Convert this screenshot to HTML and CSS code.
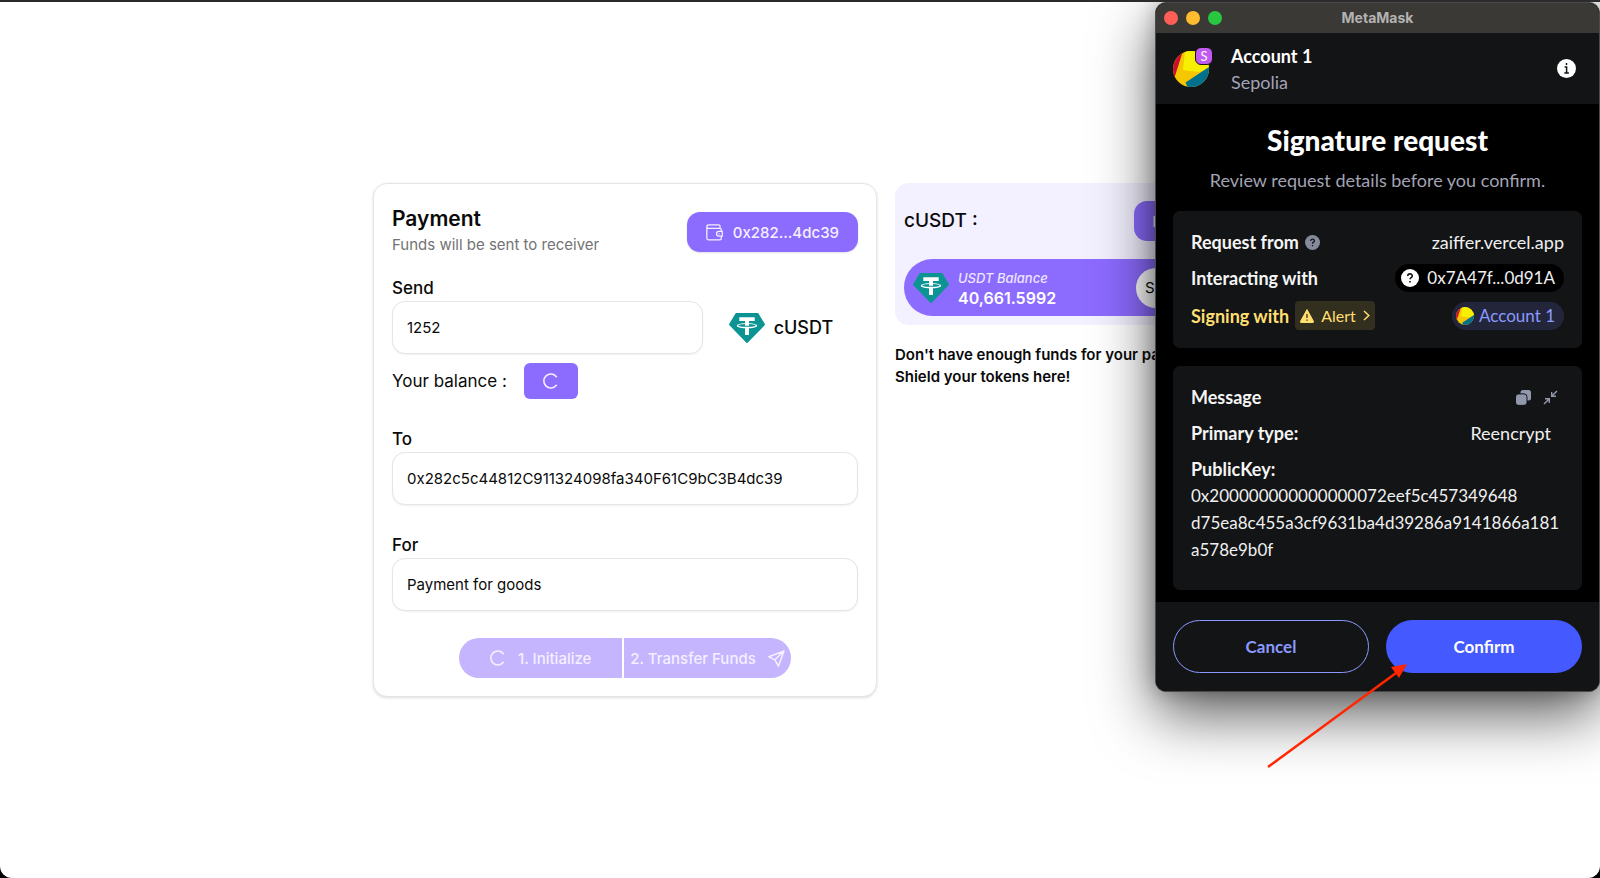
FILE: index.html
```html
<!DOCTYPE html>
<html lang="en">
<head>
<meta charset="utf-8">
<title>Payment</title>
<link rel="stylesheet" href="styles.css">
</head>
<body>
<svg class="defs" aria-hidden="true">
  <symbol id="tether" viewBox="0 0 36 30">
    <path fill="#0c9393" d="M7.400 0h21.200q.6 0 .9.500L35.800 11q.4.700-.2 1.300L18.600 29.700q-.6.500-1.200 0L.4 12.300q-.6-.6-.2-1.300L6.500.5q.3-.5.9-.5z"/>
    <path fill="#fff" d="M10.300 4.300h15.400v3.600h-5.700v2.300c4.700.2 8.200 1.200 8.200 2.500s-3.500 2.300-8.200 2.500v6.700h-4v-6.700c-4.700-.2-8.200-1.200-8.200-2.500s3.500-2.300 8.200-2.500V7.900h-5.700z"/>
    <path fill="#0c9393" d="M16 10.900c-3.900.2-6.700.8-6.700 1.500s3.700 1.400 8.700 1.400 8.700-.6 8.700-1.400-2.800-1.300-6.700-1.500v1.800h-4z"/>
  </symbol>
  <symbol id="loader" viewBox="0 0 24 24">
    <path d="M20 5.500A10.500 10.500 0 1 0 20 18.500" fill="none" stroke="currentColor" stroke-width="2.400" stroke-linecap="round"/>
  </symbol>
  <symbol id="jazz" viewBox="0 0 36 36">
    <clipPath id="disc"><circle cx="18" cy="18" r="18"/></clipPath>
    <g clip-path="url(#disc)">
      <path fill="#f6c700" d="M0 0h36v36H0z"/>
      <path fill="#c8102e" d="M0 0h10L1 28H0z"/>
      <path fill="#f6f000" d="M12 0h24v17l-10 4-16-2z"/>
      <path fill="#00708f" d="M36 16v20H14.500l-2-4.500z"/>
    </g>
  </symbol>
  <symbol id="question" viewBox="0 0 20 20">
    <circle cx="10" cy="10" r="10" fill="currentColor"/>
    <path d="M7.500 7.900C7.500 4.700 12.500 4.700 12.500 7.700 12.500 9.500 10 9.600 10 11.500M10 13.300v1.800" fill="none" stroke="#131416" stroke-width="1.800"/>
  </symbol>
</svg>

<main class="page">
  <section class="card">
    <header class="card-head">
      <div>
        <h1 class="card-title">Payment</h1>
        <p class="card-sub">Funds will be sent to receiver</p>
      </div>
      <button class="btn wallet" type="button">
        <svg class="icon-wallet" viewBox="0 0 16 16" fill="none" stroke="currentColor" stroke-width="1.200"><path d="M.8 2.500q0-1.700 1.700-1.700H12q1.200 0 1.200 1.200v1.700M.8 2.500q0 1.600 1.700 1.600h10.600q1.300 0 1.300 1.300v1.500M.8 2.500v10.800q0 1.700 1.700 1.700h10.600q1.300 0 1.300-1.300v-2.300M15.300 7h-3.200a2.200 2.200 0 0 0 0 4.400h3.200z"/><path d="M11.800 9.200h1"/></svg>
        0x282...4dc39
      </button>
    </header>

    <div class="field">
      <label class="label" for="send">Send</label>
      <div class="amount">
        <input class="input" id="send" type="text" value="1252">
        <div class="token"><svg class="tether"><use href="#tether"/></svg>cUSDT</div>
      </div>
      <div class="balance">
        <span>Your balance :</span>
        <button class="btn reveal" type="button" aria-label="Loading balance"><svg class="loader"><use href="#loader"/></svg></button>
      </div>
    </div>

    <div class="field">
      <label class="label" for="to">To</label>
      <input class="input" id="to" type="text" value="0x282c5c44812C911324098fa340F61C9bC3B4dc39">
    </div>

    <div class="field">
      <label class="label" for="for">For</label>
      <input class="input" id="for" type="text" value="Payment for goods">
    </div>

    <div class="steps">
      <button class="btn step first" type="button"><svg class="loader"><use href="#loader"/></svg>1. Initialize</button>
      <button class="btn step last" type="button">2. Transfer Funds
        <svg class="send" viewBox="0 0 17 17" fill="none" stroke="currentColor" stroke-width="1.500" stroke-linejoin="round"><path d="M16 1 .9 6.800l6 3 3.500 6.400zM16 1 6.900 9.800"/></svg>
      </button>
    </div>
  </section>

  <aside class="side">
    <div class="panel">
      <div class="panel-head">
        <h2 class="panel-title">cUSDT :</h2>
        <button class="btn decrypt" type="button">Reveal</button>
      </div>
      <div class="pill">
        <svg class="tether"><use href="#tether"/></svg>
        <div class="pill-text">
          <em class="pill-label">USDT Balance</em>
          <strong class="pill-value">40,661.5992</strong>
        </div>
        <button class="shield" type="button">Shield</button>
      </div>
    </div>
    <p class="hint">Don't have enough funds for your payment?<br>Shield your tokens here!</p>
  </aside>
</main>

<section class="window" aria-label="MetaMask">
  <header class="titlebar">
    <div class="lights"><i class="light red"></i><i class="light amber"></i><i class="light green"></i></div>
    <span class="window-title">MetaMask</span>
  </header>
  <div class="account">
    <div class="avatar">
      <svg class="avatar-pic"><use href="#jazz"/></svg>
      <span class="net">S</span>
    </div>
    <div class="account-text">
      <div class="account-name">Account 1</div>
      <div class="muted">Sepolia</div>
    </div>
    <button class="plain" type="button" aria-label="Account details">
      <svg class="info" viewBox="0 0 19 19"><circle cx="9.500" cy="9.500" r="9.500" fill="#fff"/><path d="M9.500 4v2M7.600 8h2v6M7.300 14h4.600" fill="none" stroke="#131416" stroke-width="1.500"/></svg>
    </button>
  </div>

  <div class="request">
    <div class="intro">
      <h2 class="request-title">Signature request</h2>
      <p class="muted">Review request details before you confirm.</p>
    </div>
    <div class="box">
      <div class="row">
        <span class="key">Request from <svg class="help"><use href="#question"/></svg></span>
        <span>zaiffer.vercel.app</span>
      </div>
      <div class="row">
        <span class="key">Interacting with</span>
        <span class="chip dark"><svg class="chip-icon"><use href="#question"/></svg>0x7A47f...0d91A</span>
      </div>
      <div class="row">
        <span class="key warn">Signing with
          <button class="alert" type="button">
            <svg class="alert-icon" viewBox="0 0 14 14"><path d="M7 .6 13.600 12.600q.2.900-.7.900H1.100q-.9 0-.7-.9z" fill="#ffdf70" stroke="#ffdf70" stroke-linejoin="round"/><path d="M7 5v4M7 10.400v1.400" stroke="#38331f" stroke-width="1.300"/></svg>
            Alert
            <svg class="chevron" viewBox="0 0 7 11"><path d="m1 1 4.800 4.500L1 10" fill="none" stroke="currentColor" stroke-width="1.500"/></svg>
          </button>
        </span>
        <span class="chip blue"><svg class="chip-icon"><use href="#jazz"/></svg>Account 1</span>
      </div>
    </div>
    <div class="box message">
      <div class="row">
        <span class="key">Message</span>
        <span class="tools">
          <button class="plain" type="button" aria-label="Copy"><svg class="tool" viewBox="0 0 15 15"><rect x="4.500" y="0" width="10.500" height="10.500" rx="2.500" fill="#9198ab"/><rect x="-.5" y="3.900" width="11.500" height="11.500" rx="3" fill="#9198ab" stroke="#131416"/></svg></button>
          <button class="plain" type="button" aria-label="Collapse"><svg class="tool" viewBox="0 0 15 15" fill="none" stroke="#9198ab" stroke-width="1.400"><path d="M14 1 8.700 6.300M8.700 2v4.300H13M1 14l5.300-5.300M2 8.700h4.300V13"/></svg></button>
        </span>
      </div>
      <div class="row">
        <span class="key">Primary type:</span>
        <span>Reencrypt</span>
      </div>
      <div>
        <div class="key">PublicKey:</div>
        <p class="hash">0x200000000000000072eef5c457349648<br>d75ea8c455a3cf9631ba4d39286a9141866a181<br>a578e9b0f</p>
      </div>
    </div>
  </div>

  <footer class="actions">
    <button class="action cancel" type="button">Cancel</button>
    <button class="action confirm" type="button">Confirm</button>
  </footer>
</section>

<svg class="arrow" viewBox="0 0 144 108" aria-hidden="true"><path d="M3 105 131 11" stroke="#ff2600" stroke-width="2.500"/><path d="M142 2 134 16 126 5z" fill="#ff2600"/></svg>
</body>
</html>
```
FILE: styles.css
```css
* { box-sizing: border-box; }

html { background: #000; }

body {
  margin: 0;
  position: relative;
  min-height: 100vh;
  overflow: hidden;
  background: #fff;
  border-top: 2px solid #2b2b2b;
  border-radius: 0 0 12px 12px;
  font-family: Inter, "Liberation Sans", sans-serif;
  font-size: 16px;
  color: #0a0a0a;
}

h1, h2, p { margin: 0; }
button { font-family: inherit; border: 0; cursor: pointer; }
svg { display: block; flex: none; }
.defs { position: absolute; width: 0; height: 0; }

/* Page */
.page {
  display: flex;
  justify-content: center;
  align-items: flex-start;
  gap: 18px;
  padding: 181px 24px 0;
}

.card {
  flex: 0 1 504px;
  padding: 22px 18px 18px;
  border: 1px solid #e5e5e5;
  border-radius: 14px;
  background: #fff;
  box-shadow: 0 1px 3px rgba(0, 0, 0, .14);
}

.card-head {
  display: flex;
  justify-content: space-between;
  align-items: center;
  margin-bottom: 17px;
}

.card-title { font-size: 21px; line-height: 26px; font-weight: 600; }
.card-sub { font-size: 15px; line-height: 26px; color: #737373; }

.btn {
  display: flex;
  align-items: center;
  justify-content: center;
  height: 40px;
  background: #8c6bff;
  color: #f4f0ff;
  font-size: 15px;
  font-weight: 500;
}

.wallet { gap: 10px; padding: 0 19px; border-radius: 13px; box-shadow: 0 1px 2px rgba(0, 0, 0, .12); }
.icon-wallet { width: 17px; height: 17px; }

.field { margin-bottom: 27px; }
.label { display: block; font-size: 17px; line-height: 26px; font-weight: 500; }

.input {
  display: block;
  width: 100%;
  height: 53px;
  padding: 0 14px;
  border: 1px solid #e5e5e5;
  border-radius: 13px;
  background: #fff;
  box-shadow: 0 1px 2px rgba(0, 0, 0, .06);
  font-family: inherit;
  font-size: 15px;
  color: #0a0a0a;
}

.amount { display: grid; grid-template-columns: 2fr 1fr; }
.token { display: flex; align-items: center; gap: 9px; padding-left: 26px; font-size: 18px; font-weight: 500; }
.tether { width: 36px; height: 30px; }

.balance { display: flex; align-items: center; gap: 17px; margin-top: 9px; font-size: 17px; }
.reveal { width: 54px; height: 36px; padding: 0; border-radius: 6px; }
.loader { width: 16px; height: 16px; }

.steps { display: flex; justify-content: center; gap: 2px; }
.step { background: #c5b5ff; }
.first { width: 163px; gap: 12px; padding: 0; border-radius: 20px 0 0 20px; }
.last { gap: 12px; padding: 0 6px; border-radius: 0 20px 20px 0; }
.send { width: 17px; height: 17px; }

/* Side column */
.side { flex: 0 1 332px; min-width: 0; }
.panel { padding: 18px 9px 9px; border-radius: 14px; background: #f3f0ff; }
.panel-head { display: flex; justify-content: space-between; align-items: center; margin-bottom: 18px; }
.panel-title { font-size: 19px; line-height: 40px; font-weight: 500; }
.decrypt { padding: 0 18px; border-radius: 13px; }
.pill { display: flex; align-items: center; gap: 9px; height: 57px; padding: 0 9px; border-radius: 29px; background: #8c6bff; color: #fff; }
.pill-text { flex: 1; }
.pill-label { display: block; font-size: 13px; line-height: 20px; font-weight: 500; color: #ece6ff; }
.pill-value { display: block; font-size: 16px; line-height: 20px; font-weight: 600; }
.shield { width: 73px; height: 40px; padding: 0 9px; border-radius: 20px; background: #fff; color: #0a0a0a; font-size: 15px; text-align: left; }
.hint { margin-top: 19px; font-size: 15px; line-height: 22px; font-weight: 600; white-space: nowrap; }

/* Extension window, floating over the page */
.window {
  position: absolute;
  top: 0;
  right: 0;
  width: 445px;
  border: 1px solid #4a4a4a;
  border-radius: 11px;
  overflow: hidden;
  background: #000;
  box-shadow: 0 22px 60px rgba(0, 0, 0, .65), 0 0 20px rgba(0, 0, 0, .25);
  font-family: Lato, "Open Sans", sans-serif;
  font-size: 18px;
  line-height: 26px;
  color: #f0f0f0;
}

.titlebar {
  display: grid;
  grid-template-columns: 1fr auto 1fr;
  align-items: center;
  height: 30px;
  padding: 0 8px;
  background: #3a3936;
}
.lights { display: flex; gap: 8px; }
.light { width: 14px; height: 14px; border-radius: 50%; }
.red { background: #ff5f57; }
.amber { background: #febc2e; }
.green { background: #28c840; }
.window-title { font-family: Inter, sans-serif; font-size: 14px; font-weight: 700; color: #b4b3b1; }

.account { display: flex; align-items: center; gap: 22px; height: 71px; padding: 0 23px 0 17px; background: #131416; }
.avatar { position: relative; }
.avatar-pic { width: 36px; height: 36px; }
.net {
  position: absolute;
  top: -4px;
  right: -4px;
  width: 18px;
  height: 18px;
  border: 1px solid #131416;
  border-radius: 6px;
  background: #c259f0;
  color: #fff;
  font-size: 13px;
  line-height: 16px;
  text-align: center;
}
.account-text { flex: 1; }
.account-name { font-weight: 700; color: #fff; }
.muted { color: #a3a3b5; }
.plain { padding: 0; background: none; }
.info { width: 19px; height: 19px; }

.request { display: grid; gap: 18px; padding: 18px 17px 12px; }
.intro { text-align: center; }
.request-title { margin-bottom: 9px; font-size: 28px; line-height: 36px; font-weight: 900; color: #fff; }

.box { display: grid; gap: 9px; padding: 18px; border-radius: 7px; background: #131416; }
.box .row { display: flex; justify-content: space-between; align-items: center; }
.key { display: flex; align-items: center; gap: 6px; font-weight: 700; color: #f5f5f5; }
.help { width: 15px; height: 15px; color: #858b9a; }
.chip { display: flex; align-items: center; gap: 8px; height: 28px; padding: 0 9px 0 6px; border-radius: 14px; font-size: 17px; }
.chip-icon { width: 18px; height: 18px; }
.dark { background: #000; }
.dark .chip-icon { color: #fff; }
.blue { gap: 5px; padding-left: 4px; background: #23263b; color: #8b99ff; }
.warn { color: #ffdf70; }
.alert { display: flex; align-items: center; gap: 7px; height: 29px; padding: 0 5px; border-radius: 4px; background: #332f1e; color: #ffdf70; font-size: 16px; }
.alert-icon { width: 14px; height: 14px; }
.chevron { width: 7px; height: 11px; }

.message { gap: 10px; padding-bottom: 27px; }
.message .row { padding-right: 13px; }
.tools { display: flex; gap: 12px; margin-right: -7px; }
.tool { width: 15px; height: 15px; }
.hash { font-size: 17px; line-height: 27px; }

.actions { display: grid; grid-template-columns: 1fr 1fr; gap: 17px; padding: 18px 17px; background: #131416; }
.action { height: 53px; border-radius: 27px; font-size: 17px; font-weight: 700; }
.cancel { border: 1px solid #8b99ff; background: none; color: #8b99ff; }
.confirm { background: #4459ff; color: #fff; }

/* Pointer annotation */
.arrow { position: absolute; top: 660px; right: 191px; width: 144px; height: 108px; }
```
